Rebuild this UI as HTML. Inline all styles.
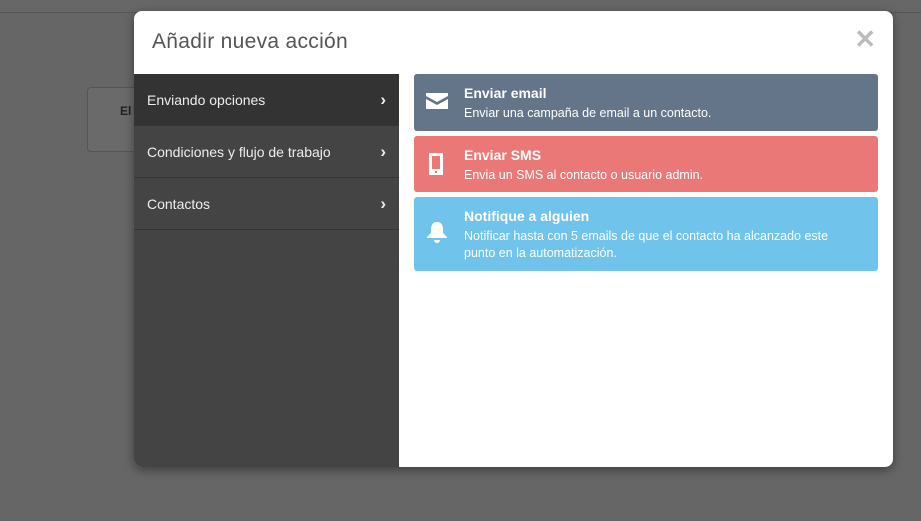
<!DOCTYPE html>
<html><head><meta charset="utf-8"><style>
*{margin:0;padding:0;box-sizing:border-box}
body{width:921px;height:521px;background:#666;font-family:"Liberation Sans",sans-serif;position:relative;overflow:hidden}
.topline{position:absolute;left:0;top:0;width:921px;height:13px;border-bottom:1px solid #555;background:#676767}
.bgcard{position:absolute;left:87px;top:87px;width:60px;height:65px;border:1px solid #555;border-radius:4px;background:#6a6a6a;font-size:12px;font-weight:bold;color:#222;padding:16px 0 0 32px}
.modal{position:absolute;left:134px;top:11px;width:759px;height:456px;background:#fff;border-radius:8px;overflow:hidden;box-shadow:0 3px 10px rgba(0,0,0,.4)}
.title{position:absolute;left:18px;top:19px;font-size:21px;color:#555;letter-spacing:.3px}
.close{position:absolute;right:17px;top:13px;font-size:26px;color:#bbb;font-weight:bold}
.side{position:absolute;left:0;top:63px;width:265px;height:393px;background:#444}
.item{height:52px;border-bottom:1px solid #353535;color:#eee;font-size:14px;padding:18px 0 0 13px;position:relative}
.item.act{background:#333}
.item:after{content:"›";position:absolute;right:13px;top:16px;font-weight:bold;font-size:17px}
.card{position:absolute;left:280px;width:464px;border-radius:3px;color:#fff;padding:11px 40px 0 50px}
.card b{font-size:14px;display:block;margin-bottom:4px}
.card span{font-size:12.5px;line-height:17px;display:block}
.ic{position:absolute;left:12px;top:19px}
</style></head><body>
<div class="topline"></div>
<div class="bgcard">El</div>
<div class="modal">
<div class="title">Añadir nueva acción</div>
<div class="close">✕</div>
<div class="side">
<div class="item act">Enviando opciones</div>
<div class="item">Condiciones y flujo de trabajo</div>
<div class="item">Contactos</div>
</div>
<div class="card" style="top:63px;height:57px;background:#647489">
<svg class="ic" width="22" height="16" viewBox="0 0 22 16"><path d="M0 0H22V3L11 9L0 3Z M0 6L11 12L22 6V16H0Z" fill="#fff"/></svg>
<b>Enviar email</b><span>Enviar una campaña de email a un contacto.</span></div>
<div class="card" style="top:125px;height:56px;background:#ea7876">
<svg class="ic" style="left:15px;top:17px" width="14" height="22" viewBox="0 0 14 22"><path d="M0 0H14V22H0Z M3 3V16H11V3Z M6 18V20H8V18Z" fill="#fff" fill-rule="evenodd"/></svg>
<b>Enviar SMS</b><span>Envia un SMS al contacto o usuario admin.</span></div>
<div class="card" style="top:186px;height:74px;background:#70c3ea">
<svg class="ic" style="top:24px" width="22" height="22" viewBox="0 0 22 22"><path d="M11 1C7 1 5 4 5 8V12L1 16V17H21V16L17 12V8C17 4 15 1 11 1Z M8 19H14C14 21 12 22 11 22C10 22 8 21 8 19Z" fill="#fff"/></svg>
<b>Notifique a alguien</b><span>Notificar hasta con 5 emails de que el contacto ha alcanzado este punto en la automatización.</span></div>
</div>
</body></html>
